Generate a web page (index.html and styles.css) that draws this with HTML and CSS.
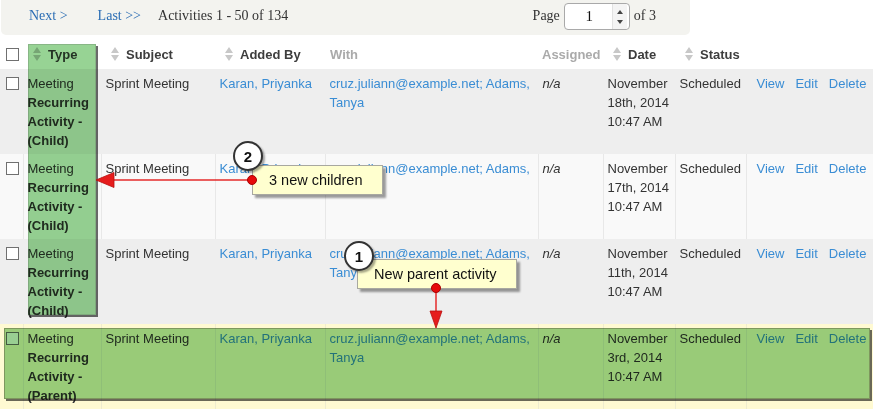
FILE: index.html
```html
<!DOCTYPE html>
<html>
<head>
<meta charset="utf-8">
<title>Activities</title>
<link rel="stylesheet" href="styles.css">
</head>
<body>
<div class="page">
  <div class="pager">
    <a class="plink">Next &gt;</a>
    <a class="plink last">Last &gt;&gt;</a>
    <span class="count">Activities 1 - 50 of 134</span>
    <span class="pagebox">
      <span>Page</span>
      <span class="spin">
        <span class="val">1</span>
        <span class="arrows">
          <svg width="8" height="6" viewBox="0 0 8 6"><path d="M4 1L7 5H1Z" fill="#444"/></svg>
          <svg width="8" height="6" viewBox="0 0 8 6"><path d="M4 5L7 1H1Z" fill="#444"/></svg>
        </span>
      </span>
      <span>of 3</span>
    </span>
  </div>

  <table class="grid">
    <colgroup>
      <col class="c-chk"><col class="c-type"><col class="c-subj"><col class="c-by"><col class="c-with"><col class="c-asg"><col class="c-date"><col class="c-stat"><col class="c-act">
    </colgroup>
    <thead>
      <tr>
        <th class="chk"><input type="checkbox" class="cb"></th>
        <th class="sort"><svg class="si" width="8" height="14" viewBox="0 0 8 14"><path d="M4 0L8 6H0Z M4 14L8 8H0Z" fill="#c8c8c8"/></svg>Type</th>
        <th class="sort"><svg class="si" width="8" height="14" viewBox="0 0 8 14"><path d="M4 0L8 6H0Z M4 14L8 8H0Z" fill="#c8c8c8"/></svg>Subject</th>
        <th class="sort"><svg class="si" width="8" height="14" viewBox="0 0 8 14"><path d="M4 0L8 6H0Z M4 14L8 8H0Z" fill="#c8c8c8"/></svg>Added By</th>
        <th class="muted">With</th>
        <th class="muted">Assigned</th>
        <th class="sort"><svg class="si" width="8" height="14" viewBox="0 0 8 14"><path d="M4 0L8 6H0Z M4 14L8 8H0Z" fill="#c8c8c8"/></svg>Date</th>
        <th class="sort"><svg class="si" width="8" height="14" viewBox="0 0 8 14"><path d="M4 0L8 6H0Z M4 14L8 8H0Z" fill="#c8c8c8"/></svg>Status</th>
        <th></th>
      </tr>
    </thead>
    <tbody>
      <tr class="odd">
        <td class="chk"><input type="checkbox" class="cb"></td>
        <td>Meeting<br><b>Recurring Activity - (Child)</b></td>
        <td>Sprint Meeting</td>
        <td><a class="lnk">Karan, Priyanka</a></td>
        <td><a class="lnk">cruz.juliann@example.net; Adams,<br>Tanya</a></td>
        <td><i>n/a</i></td>
        <td class="date">November<br>18th, 2014<br>10:47 AM</td>
        <td class="nw">Scheduled</td>
        <td class="acts"><a class="lnk">View</a><a class="lnk">Edit</a><a class="lnk">Delete</a></td>
      </tr>
      <tr class="even">
        <td class="chk"><input type="checkbox" class="cb"></td>
        <td>Meeting<br><b>Recurring Activity - (Child)</b></td>
        <td>Sprint Meeting</td>
        <td><a class="lnk">Karan, Priyanka</a></td>
        <td><a class="lnk">cruz.juliann@example.net; Adams,<br>Tanya</a></td>
        <td><i>n/a</i></td>
        <td class="date">November<br>17th, 2014<br>10:47 AM</td>
        <td class="nw">Scheduled</td>
        <td class="acts"><a class="lnk">View</a><a class="lnk">Edit</a><a class="lnk">Delete</a></td>
      </tr>
      <tr class="odd">
        <td class="chk"><input type="checkbox" class="cb"></td>
        <td>Meeting<br><b>Recurring Activity - (Child)</b></td>
        <td>Sprint Meeting</td>
        <td><a class="lnk">Karan, Priyanka</a></td>
        <td><a class="lnk">cruz.juliann@example.net; Adams,<br>Tanya</a></td>
        <td><i>n/a</i></td>
        <td class="date">November<br>11th, 2014<br>10:47 AM</td>
        <td class="nw">Scheduled</td>
        <td class="acts"><a class="lnk">View</a><a class="lnk">Edit</a><a class="lnk">Delete</a></td>
      </tr>
      <tr class="sel">
        <td class="chk"><input type="checkbox" class="cb"></td>
        <td>Meeting<br><b>Recurring Activity - (Parent)</b></td>
        <td>Sprint Meeting</td>
        <td><a class="lnk">Karan, Priyanka</a></td>
        <td><a class="lnk">cruz.juliann@example.net; Adams,<br>Tanya</a></td>
        <td><i>n/a</i></td>
        <td class="date">November<br>3rd, 2014<br>10:47 AM</td>
        <td class="nw">Scheduled</td>
        <td class="acts"><a class="lnk">View</a><a class="lnk">Edit</a><a class="lnk">Delete</a></td>
      </tr>
    </tbody>
  </table>

  <div class="hl hl-col"></div>
  <div class="hl hl-row"></div>

  <div class="note note-2">3 new children</div>
  <div class="note note-1">New parent activity</div>
  <div class="num num-2">2</div>
  <div class="num num-1">1</div>

  <svg class="arrows-layer" width="880" height="410" viewBox="0 0 880 410">
    <line x1="252" y1="180" x2="113" y2="180" stroke="#e52a2a" stroke-width="1.5"/>
    <polygon points="96,180 114,172.5 114,187.5" fill="#e61c1c" stroke="#b80f0f" stroke-width="0.8"/>
    <circle cx="252" cy="180" r="4.5" fill="#e60a0a" stroke="#a00" stroke-width="1"/>
    <line x1="436" y1="288" x2="436" y2="312" stroke="#e52a2a" stroke-width="1.5"/>
    <polygon points="436,328 430,311 442,311" fill="#e61c1c" stroke="#b80f0f" stroke-width="0.8"/>
    <circle cx="436" cy="288" r="4.5" fill="#e60a0a" stroke="#a00" stroke-width="1"/>
  </svg>
</div>
</body>
</html>
```

FILE: styles.css
```css
html, body {
  margin: 0;
  padding: 0;
  background: #ffffff;
}

.page {
  position: relative;
  width: 880px;
  height: 410px;
  overflow: hidden;
}

/* ---------- pager ---------- */
.pager {
  margin-left: 1px;
  width: 689px;
  height: 35px;
  background: #f3f3ef;
  border-radius: 0 0 5px 5px;
  display: flex;
  align-items: center;
  font: 14px/1 "Liberation Serif", "Times New Roman", serif;
  color: #333;
  box-sizing: border-box;
  padding: 0 0 4px 28px;
}

.plink {
  color: #2b6db4;
  margin-right: 30px;
}

.plink.last {
  margin-right: 17px;
}

.count {
  color: #333;
}

.pagebox {
  margin-left: auto;
  margin-right: 34px;
  display: flex;
  align-items: center;
  gap: 4px;
}

.spin {
  display: flex;
  align-items: stretch;
  width: 66px;
  height: 27px;
  box-sizing: border-box;
  border: 1px solid #a9a9a9;
  border-radius: 4px;
  background: #fff;
  margin-top: 2px;
}

.val {
  flex: 1;
  display: flex;
  align-items: center;
  justify-content: center;
  font-size: 15px;
  color: #111;
  padding-left: 2px;
}

.arrows {
  width: 14px;
  display: flex;
  flex-direction: column;
  justify-content: center;
  gap: 4px;
  align-items: center;
  margin-right: 2px;
  background: #f4f4f4;
  border-left: 1px solid #e2e2e2;
}

.arrows svg {
  display: block;
}

/* ---------- grid ---------- */
.grid {
  border-collapse: collapse;
  table-layout: fixed;
  width: 873px;
  font: 13px/19px "Liberation Sans", Arial, sans-serif;
  color: #333;
}

.c-chk { width: 23px; }
.c-type { width: 78px; }
.c-subj { width: 114px; }
.c-by { width: 110px; }
.c-with { width: 213px; }
.c-asg { width: 65px; }
.c-date { width: 72px; }
.c-stat { width: 71px; }
.c-act { width: 127px; }

.grid th {
  height: 34px;
  box-sizing: border-box;
  padding: 5px 5px 1px 5px;
  text-align: left;
  vertical-align: middle;
  font-weight: bold;
  color: #3d3d3d;
  white-space: nowrap;
  background: #fff;
}

.grid th.sort {
  padding-left: 10px;
}

.grid th.muted {
  color: #aaaaaa;
  padding-left: 5px;
}

.grid th.muted + th.muted {
  padding-left: 4px;
}

.si {
  vertical-align: -2px;
  margin-right: 7px;
}

.grid td {
  padding: 5px 5px 4px 4px;
  height: 85px;
  box-sizing: border-box;
  vertical-align: top;
  text-align: left;
  border-left: 1px solid #e8e8e8;
}

.grid td:first-child {
  border-left: 0;
}

.grid td.date {
  padding-right: 0;
  white-space: nowrap;
}

.grid th.chk,
.grid td.chk {
  padding-left: 6px;
  padding-right: 0;
}

.grid td.chk .cb {
  margin-top: 3px;
}

.cb {
  appearance: none;
  -webkit-appearance: none;
  display: block;
  width: 13px;
  height: 13px;
  margin: 0;
  border: 1px solid #707070;
  background: #fff;
  box-sizing: border-box;
}

tr.odd td {
  background: #eeeeee;
  border-left-color: #eeeeee;
}

tr.even td {
  background: #f9f9f9;
}

tr.sel td {
  background: #fffad2;
  border-left-color: #efeccf;
}

.lnk {
  color: #3a8dd4;
  text-decoration: none;
}

.nw {
  white-space: nowrap;
}

.grid td.acts {
  padding-left: 10px;
  white-space: nowrap;
}

.acts .lnk {
  margin-right: 11px;
}

/* ---------- highlight overlays ---------- */
.hl {
  position: absolute;
  background: #97d394;
  mix-blend-mode: multiply;
  box-sizing: border-box;
}

.hl-col {
  left: 28px;
  top: 44px;
  width: 68px;
  height: 271px;
  border: 1px solid #88b686;
  box-shadow: 2px 2px 0 #6a6a6a;
}

.hl-row {
  left: 4px;
  top: 328px;
  width: 866px;
  height: 71px;
  background: #99cf92;
  border: 1px solid #7e9a72;
  box-shadow: 2px 2px 0 #6a6a6a;
}

/* ---------- callouts ---------- */
.note {
  position: absolute;
  box-sizing: border-box;
  background: #ffffcf;
  border: 1px solid #a8a8a0;
  box-shadow: 3px 3px 2px rgba(0, 0, 0, 0.38);
  font: 14.5px/1 "Liberation Sans", Arial, sans-serif;
  color: #111;
  display: flex;
  align-items: center;
  padding-left: 16px;
  white-space: nowrap;
}

.note-2 {
  left: 252px;
  top: 165px;
  width: 131px;
  height: 30px;
}

.note-1 {
  left: 357px;
  top: 259px;
  width: 160px;
  height: 30px;
}

.num {
  position: absolute;
  width: 30px;
  height: 30px;
  box-sizing: border-box;
  border-radius: 50%;
  background: #fff;
  border: 2px solid #333;
  box-shadow: 2px 2px 2px rgba(0, 0, 0, 0.35);
  display: flex;
  align-items: center;
  justify-content: center;
  font: bold 15px/1 "Liberation Sans", Arial, sans-serif;
  color: #111;
}

.num-2 {
  left: 233px;
  top: 141px;
}

.num-1 {
  left: 344px;
  top: 241px;
}

.arrows-layer {
  position: absolute;
  left: 0;
  top: 0;
  pointer-events: none;
}
```
